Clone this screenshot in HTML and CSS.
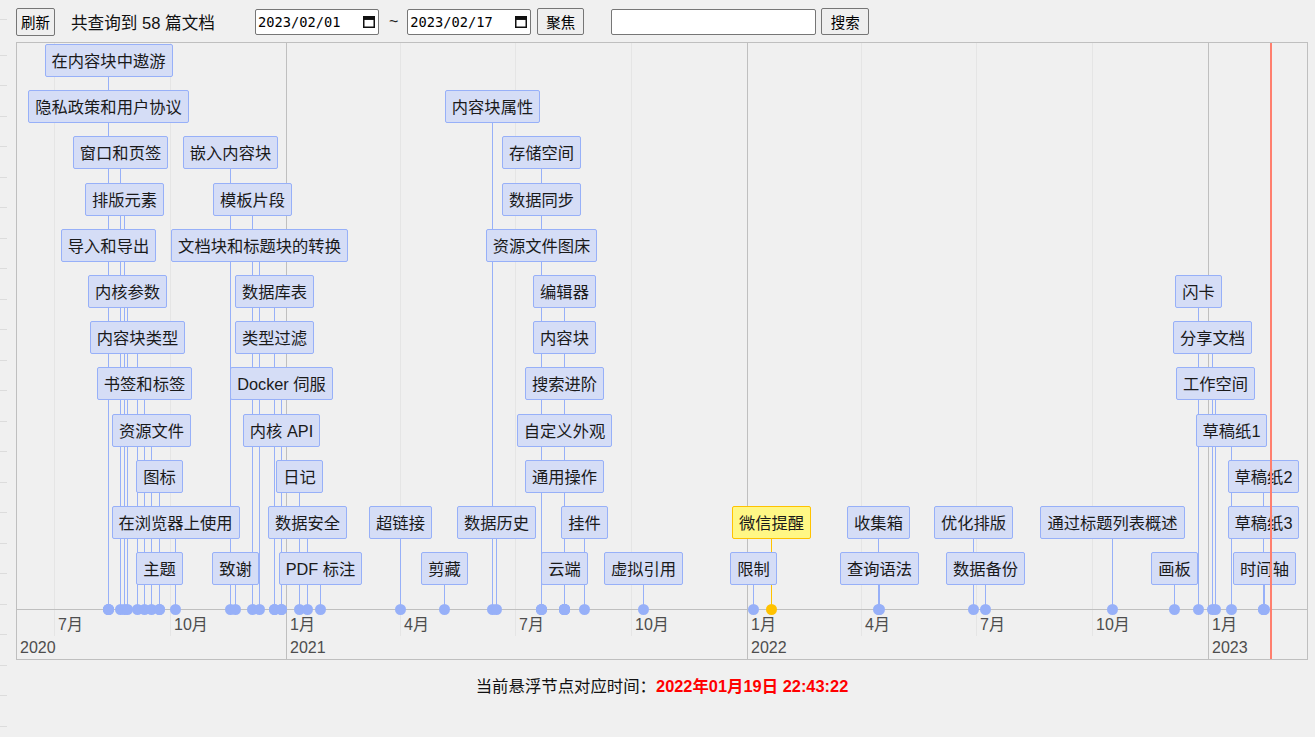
FILE: index.html
```html
<!DOCTYPE html>
<html lang="zh-CN">
<head>
<meta charset="utf-8">
<title>时间轴</title>
<link rel="stylesheet" href="styles.css">
</head>
<body>
<div class="page">
  <div class="rail"></div>
  <div class="main">
    <div class="toolbar">
      <button class="btn btn-refresh">刷新</button>
      <span class="count">共查询到 58 篇文档</span>
      <label class="date">
        <input class="date-input" type="text" value="2023/02/01">
        <svg class="cal" width="12" height="12" viewBox="0 0 12 12"><rect x="0.75" y="0.75" width="10.5" height="10.5" fill="none" stroke="#111" stroke-width="1.5"/><rect x="0.75" y="0.75" width="10.5" height="3.2" fill="#111"/></svg>
      </label>
      <span class="tilde">~</span>
      <label class="date">
        <input class="date-input" type="text" value="2023/02/17">
        <svg class="cal" width="12" height="12" viewBox="0 0 12 12"><rect x="0.75" y="0.75" width="10.5" height="10.5" fill="none" stroke="#111" stroke-width="1.5"/><rect x="0.75" y="0.75" width="10.5" height="3.2" fill="#111"/></svg>
      </label>
      <button class="btn btn-focus">聚焦</button>
      <input class="search" type="text">
      <button class="btn btn-search">搜索</button>
    </div>

    <div class="timeline">
      <div class="grid minor" style="left:37px"></div>
      <div class="grid minor" style="left:153px"></div>
      <div class="grid major" style="left:269px"></div>
      <div class="grid minor" style="left:383px"></div>
      <div class="grid minor" style="left:498px"></div>
      <div class="grid minor" style="left:614px"></div>
      <div class="grid major" style="left:730px"></div>
      <div class="grid minor" style="left:844px"></div>
      <div class="grid minor" style="left:959px"></div>
      <div class="grid minor" style="left:1075px"></div>
      <div class="grid major" style="left:1191px"></div>

      <div class="center">
        <div class="it" style="left:91px;top:1px"><div class="box">在内容块中遨游</div><div class="ln"></div><div class="dot"></div></div>
        <div class="it" style="left:91px;top:47px"><div class="box">隐私政策和用户协议</div><div class="ln"></div><div class="dot"></div></div>
        <div class="it" style="left:475px;top:47px"><div class="box">内容块属性</div><div class="ln"></div><div class="dot"></div></div>
        <div class="it" style="left:103px;top:93px"><div class="box">窗口和页签</div><div class="ln"></div><div class="dot"></div></div>
        <div class="it" style="left:213px;top:93px"><div class="box">嵌入内容块</div><div class="ln"></div><div class="dot"></div></div>
        <div class="it" style="left:524px;top:93px"><div class="box">存储空间</div><div class="ln"></div><div class="dot"></div></div>
        <div class="it" style="left:107px;top:140px"><div class="box">排版元素</div><div class="ln"></div><div class="dot"></div></div>
        <div class="it" style="left:235px;top:140px"><div class="box">模板片段</div><div class="ln"></div><div class="dot"></div></div>
        <div class="it" style="left:524px;top:140px"><div class="box">数据同步</div><div class="ln"></div><div class="dot"></div></div>
        <div class="it" style="left:91px;top:186px"><div class="box">导入和导出</div><div class="ln"></div><div class="dot"></div></div>
        <div class="it" style="left:242px;top:186px"><div class="box">文档块和标题块的转换</div><div class="ln"></div><div class="dot"></div></div>
        <div class="it" style="left:524px;top:186px"><div class="box">资源文件图床</div><div class="ln"></div><div class="dot"></div></div>
        <div class="it" style="left:110px;top:232px"><div class="box">内核参数</div><div class="ln"></div><div class="dot"></div></div>
        <div class="it" style="left:257px;top:232px"><div class="box">数据库表</div><div class="ln"></div><div class="dot"></div></div>
        <div class="it" style="left:547px;top:232px"><div class="box">编辑器</div><div class="ln"></div><div class="dot"></div></div>
        <div class="it" style="left:1181px;top:232px"><div class="box">闪卡</div><div class="ln"></div><div class="dot"></div></div>
        <div class="it" style="left:120px;top:278px"><div class="box">内容块类型</div><div class="ln"></div><div class="dot"></div></div>
        <div class="it" style="left:257px;top:278px"><div class="box">类型过滤</div><div class="ln"></div><div class="dot"></div></div>
        <div class="it" style="left:547px;top:278px"><div class="box">内容块</div><div class="ln"></div><div class="dot"></div></div>
        <div class="it" style="left:1195px;top:278px"><div class="box">分享文档</div><div class="ln"></div><div class="dot"></div></div>
        <div class="it" style="left:127px;top:324px"><div class="box">书签和标签</div><div class="ln"></div><div class="dot"></div></div>
        <div class="it" style="left:264px;top:324px"><div class="box">Docker 伺服</div><div class="ln"></div><div class="dot"></div></div>
        <div class="it" style="left:547px;top:324px"><div class="box">搜索进阶</div><div class="ln"></div><div class="dot"></div></div>
        <div class="it" style="left:1198px;top:324px"><div class="box">工作空间</div><div class="ln"></div><div class="dot"></div></div>
        <div class="it" style="left:134px;top:371px"><div class="box">资源文件</div><div class="ln"></div><div class="dot"></div></div>
        <div class="it" style="left:264px;top:371px"><div class="box">内核 API</div><div class="ln"></div><div class="dot"></div></div>
        <div class="it" style="left:547px;top:371px"><div class="box">自定义外观</div><div class="ln"></div><div class="dot"></div></div>
        <div class="it" style="left:1214px;top:371px"><div class="box">草稿纸1</div><div class="ln"></div><div class="dot"></div></div>
        <div class="it" style="left:142px;top:417px"><div class="box">图标</div><div class="ln"></div><div class="dot"></div></div>
        <div class="it" style="left:282px;top:417px"><div class="box">日记</div><div class="ln"></div><div class="dot"></div></div>
        <div class="it" style="left:547px;top:417px"><div class="box">通用操作</div><div class="ln"></div><div class="dot"></div></div>
        <div class="it" style="left:1246px;top:417px"><div class="box">草稿纸2</div><div class="ln"></div><div class="dot"></div></div>
        <div class="it" style="left:158px;top:463px"><div class="box">在浏览器上使用</div><div class="ln"></div><div class="dot"></div></div>
        <div class="it" style="left:290px;top:463px"><div class="box">数据安全</div><div class="ln"></div><div class="dot"></div></div>
        <div class="it" style="left:383px;top:463px"><div class="box">超链接</div><div class="ln"></div><div class="dot"></div></div>
        <div class="it" style="left:479px;top:463px"><div class="box">数据历史</div><div class="ln"></div><div class="dot"></div></div>
        <div class="it" style="left:567px;top:463px"><div class="box">挂件</div><div class="ln"></div><div class="dot"></div></div>
        <div class="it sel" style="left:754px;top:463px"><div class="box">微信提醒</div><div class="ln"></div><div class="dot"></div></div>
        <div class="it" style="left:861px;top:463px"><div class="box">收集箱</div><div class="ln"></div><div class="dot"></div></div>
        <div class="it" style="left:956px;top:463px"><div class="box">优化排版</div><div class="ln"></div><div class="dot"></div></div>
        <div class="it" style="left:1095px;top:463px"><div class="box">通过标题列表概述</div><div class="ln"></div><div class="dot"></div></div>
        <div class="it" style="left:1246px;top:463px"><div class="box">草稿纸3</div><div class="ln"></div><div class="dot"></div></div>
        <div class="it" style="left:142px;top:509px"><div class="box">主题</div><div class="ln"></div><div class="dot"></div></div>
        <div class="it" style="left:218px;top:509px"><div class="box">致谢</div><div class="ln"></div><div class="dot"></div></div>
        <div class="it" style="left:303px;top:509px"><div class="box">PDF 标注</div><div class="ln"></div><div class="dot"></div></div>
        <div class="it" style="left:427px;top:509px"><div class="box">剪藏</div><div class="ln"></div><div class="dot"></div></div>
        <div class="it" style="left:547px;top:509px"><div class="box">云端</div><div class="ln"></div><div class="dot"></div></div>
        <div class="it" style="left:626px;top:509px"><div class="box">虚拟引用</div><div class="ln"></div><div class="dot"></div></div>
        <div class="it" style="left:736px;top:509px"><div class="box">限制</div><div class="ln"></div><div class="dot"></div></div>
        <div class="it" style="left:862px;top:509px"><div class="box">查询语法</div><div class="ln"></div><div class="dot"></div></div>
        <div class="it" style="left:968px;top:509px"><div class="box">数据备份</div><div class="ln"></div><div class="dot"></div></div>
        <div class="it" style="left:1157px;top:509px"><div class="box">画板</div><div class="ln"></div><div class="dot"></div></div>
        <div class="it" style="left:1247px;top:509px"><div class="box">时间轴</div><div class="ln"></div><div class="dot"></div></div>
      </div>

      <div class="axis">
        <span class="lbl minor-lbl" style="left:41px">7月</span>
        <span class="lbl minor-lbl" style="left:157px">10月</span>
        <span class="lbl minor-lbl" style="left:273px">1月</span>
        <span class="lbl minor-lbl" style="left:387px">4月</span>
        <span class="lbl minor-lbl" style="left:502px">7月</span>
        <span class="lbl minor-lbl" style="left:618px">10月</span>
        <span class="lbl minor-lbl" style="left:734px">1月</span>
        <span class="lbl minor-lbl" style="left:848px">4月</span>
        <span class="lbl minor-lbl" style="left:963px">7月</span>
        <span class="lbl minor-lbl" style="left:1079px">10月</span>
        <span class="lbl minor-lbl" style="left:1195px">1月</span>
        <span class="lbl major-lbl" style="left:3px">2020</span>
        <span class="lbl major-lbl" style="left:273px">2021</span>
        <span class="lbl major-lbl" style="left:734px">2022</span>
        <span class="lbl major-lbl" style="left:1195px">2023</span>
      </div>

      <div class="now"></div>
    </div>

    <p class="hover">当前悬浮节点对应时间：<b>2022年01月19日 22:43:22</b></p>
  </div>
</div>
</body>
</html>
```

FILE: styles.css
```css
html, body {
  margin: 0;
  padding: 0;
  background: #f0f0f0;
}

body {
  font-family: "Liberation Sans", "Noto Sans CJK SC", sans-serif;
  color: #000;
}

.page {
  display: flex;
  height: 737px;
  overflow: hidden;
}

.rail {
  flex: none;
  width: 7px;
  background: repeating-linear-gradient(to bottom, transparent 0, transparent 29.5px, #dcdcdc 29.5px, #dcdcdc 30.5px);
  background-position: 0 25px;
}

.main {
  flex: none;
  width: 1292px;
  margin-left: 9px;
  padding-top: 7px;
}

/* toolbar */
.toolbar {
  display: flex;
  align-items: center;
  height: 29px;
  margin-bottom: 6px;
}

.btn {
  box-sizing: border-box;
  height: 27px;
  padding: 0;
  border: 1px solid #767676;
  border-radius: 2px;
  background: #efefef;
  color: #000;
  font: 14.5px "Noto Sans CJK SC", sans-serif;
  line-height: 25px;
}

.btn-refresh {
  width: 39px;
  height: 28px;
}

.btn-focus {
  width: 47px;
  margin-left: 6px;
}

.btn-search {
  width: 48px;
  margin-left: 5px;
}

.count {
  flex: none;
  width: 184px;
  margin-left: 16px;
  font-size: 16.6px;
  color: #111;
  white-space: nowrap;
}

.date {
  display: flex;
  align-items: center;
  box-sizing: border-box;
  width: 124px;
  height: 26px;
  padding: 0 3px 0 2px;
  border: 1px solid #767676;
  border-radius: 2px;
  background: #fff;
}

.date-input {
  flex: 1;
  min-width: 0;
  padding: 0;
  border: 0;
  outline: 0;
  background: transparent;
  color: #000;
  font: 13.7px "DejaVu Sans Mono", "Liberation Mono", monospace;
}

.cal {
  flex: none;
  display: block;
}

.tilde {
  margin: 0 9px 0 10px;
  font-size: 16px;
  color: #222;
}

.search {
  box-sizing: border-box;
  width: 205px;
  height: 26px;
  margin: 0 0 0 27px;
  padding: 0 3px;
  border: 1px solid #767676;
  border-radius: 2px;
  background: #fff;
}

/* timeline */
.timeline {
  position: relative;
  box-sizing: border-box;
  width: 1292px;
  height: 618px;
  border: 1px solid #bfbfbf;
  display: flex;
  flex-direction: column;
}

.grid {
  position: absolute;
  top: 0;
  width: 1px;
  z-index: 0;
}

.grid.minor {
  height: 593px;
  background: #e5e5e5;
}

.grid.major {
  bottom: 0;
  background: #bfbfbf;
}

.center {
  position: relative;
  flex: none;
  height: 566px;
}

.axis {
  position: relative;
  flex: 1;
  border-top: 1px solid #bfbfbf;
}

.it {
  position: absolute;
  bottom: 0;
  width: 1px;
  display: flex;
  flex-direction: column;
  align-items: center;
}

.box {
  position: relative;
  z-index: 2;
  flex: none;
  box-sizing: border-box;
  height: 33px;
  padding: 0 6px;
  border: 1px solid #97b0f8;
  border-radius: 2px;
  background: #d5ddf6;
  color: #1a1a1a;
  font-size: 16.3px;
  line-height: 32px;
  white-space: nowrap;
}

.ln {
  position: relative;
  z-index: 1;
  flex: 1;
  width: 1px;
  background: #97b0f8;
}

.dot {
  position: absolute;
  z-index: 3;
  left: -5px;
  bottom: -6px;
  width: 11px;
  height: 11px;
  border-radius: 50%;
  background: #97b0f8;
}

.it.sel .box {
  background: #fff785;
  border-color: #ffc200;
}

.it.sel .ln,
.it.sel .dot {
  background: #ffc200;
}

.lbl {
  position: absolute;
  font-size: 16px;
  line-height: 20px;
  color: #4d4d4d;
  white-space: nowrap;
}

.minor-lbl {
  top: 5px;
}

.major-lbl {
  top: 28px;
}

.now {
  position: absolute;
  z-index: 5;
  top: 0;
  bottom: 0;
  left: 1253px;
  width: 2px;
  background: #ff7f6e;
}

.hover {
  margin: 15px 0 0;
  text-align: center;
  font-size: 16.4px;
  line-height: 22px;
  color: #111;
}

.hover b {
  color: #f00;
}
```
